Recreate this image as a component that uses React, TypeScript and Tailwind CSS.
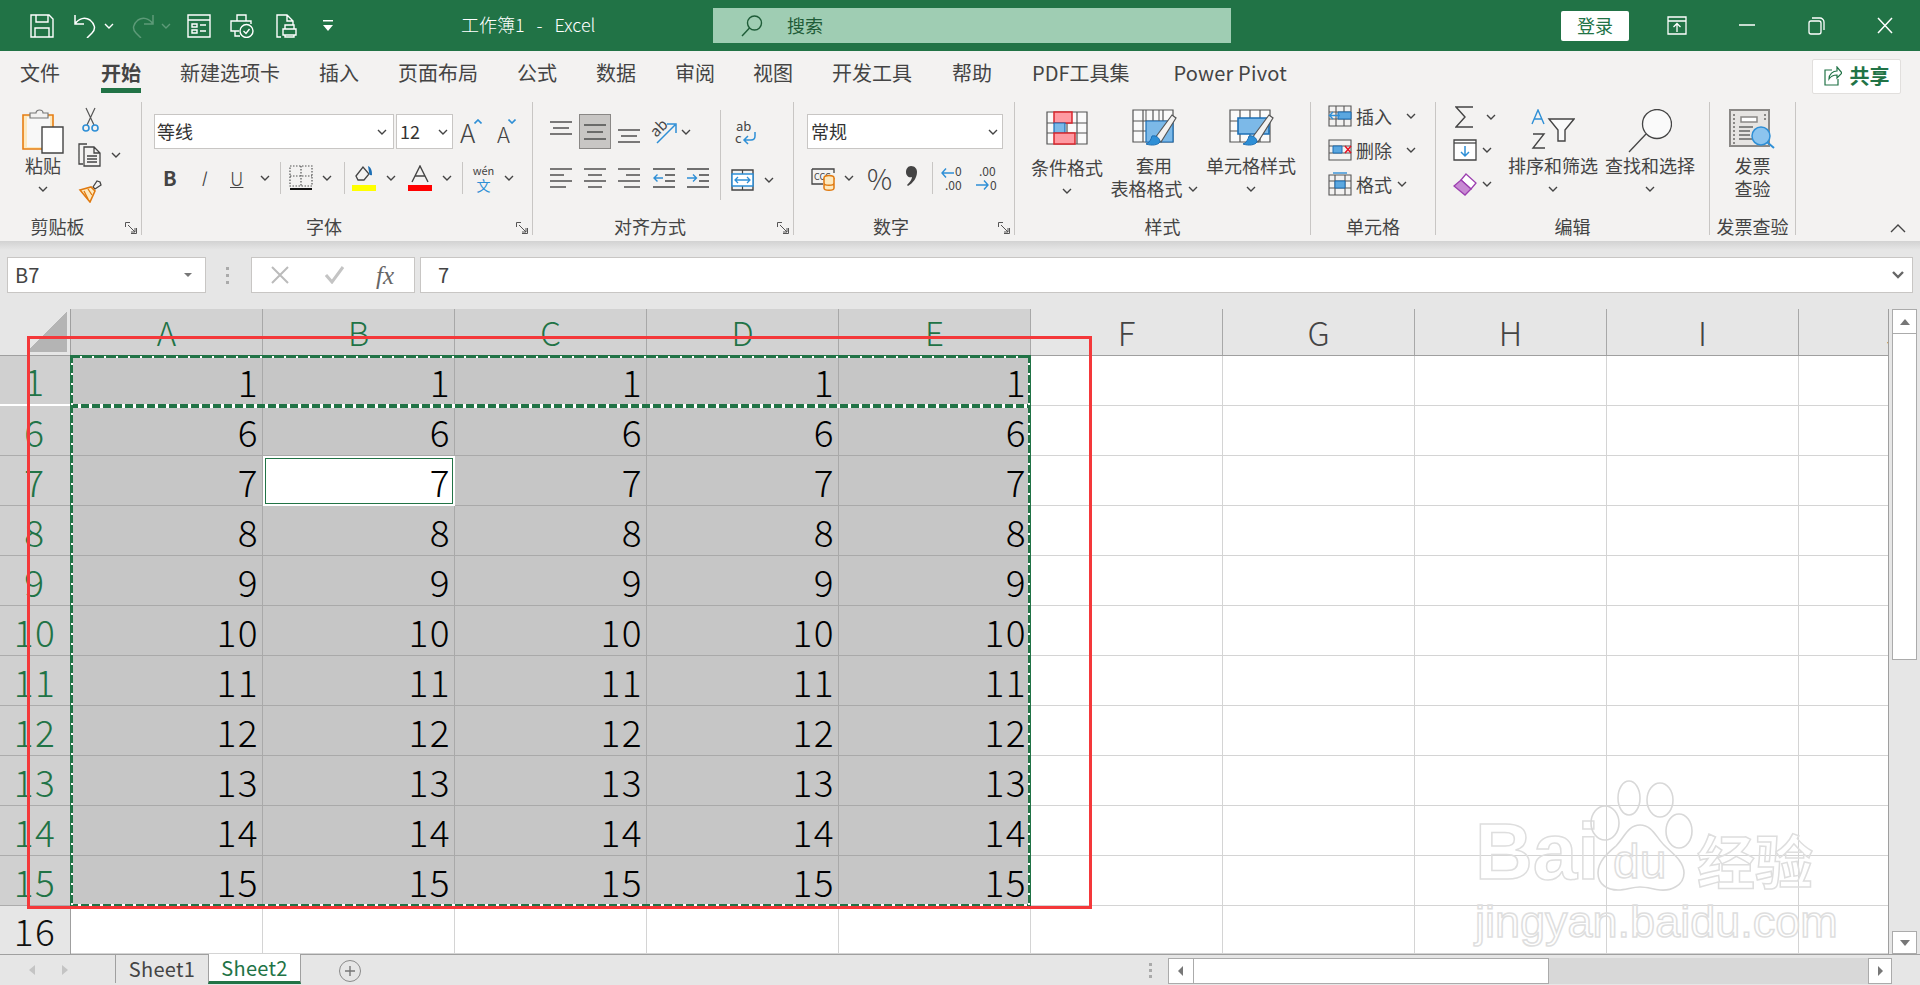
import type { ReactNode } from 'react';

const Chev = ({ className = '', color = '#444' }: { className?: string; color?: string }) => (
  <svg width="10" height="6" viewBox="0 0 10 6" className={`shrink-0 ${className}`}>
    <path d="M1 1l4 4 4-4" fill="none" stroke={color} strokeWidth="1.4" />
  </svg>
);

const Sep = ({ className = '' }: { className?: string }) => <div className={`w-px h-[32px] bg-[#c8c6c4] shrink-0 ${className}`} />;

const Launcher = () => (
  <svg width="12" height="12" viewBox="0 0 12 12" className="absolute right-[4px] bottom-[1px]">
    <path d="M.5 5V.5H5M11.5 6v5.5H6M3 3l7 7M6 10h4V6" fill="none" stroke="#555" strokeWidth="1" />
  </svg>
);

function Group({ w, label, launcher, children }: { w: string; label: string; launcher?: boolean; children: ReactNode }) {
  return (
    <div className={`relative h-[133px] flex flex-col shrink-0 border-r border-[#c8c6c4] ${w}`}>
      <div className="h-[115px] flex">{children}</div>
      <div className={`h-[18px] leading-[19px] text-[18px] text-[#444] text-center ${launcher ? 'pr-[26px]' : ''}`}>{label}</div>
      {launcher && <Launcher />}
    </div>
  );
}

function LargeButton({ icon, lines, tail, className = '' }: { icon: ReactNode; lines: string[]; tail?: boolean; className?: string }) {
  return (
    <div className={`flex flex-col items-center shrink-0 pt-[7px] text-[18px] text-[#444] ${className}`}>
      <div className="h-[45px] flex items-start justify-center">{icon}</div>
      <div className="h-[23px] leading-[23px] whitespace-nowrap">{lines[0]}</div>
      <div className="h-[23px] leading-[23px] whitespace-nowrap flex items-center gap-[5px]">
        {lines[1]}
        {(tail || !lines[1]) && <Chev />}
      </div>
    </div>
  );
}

const L = '#444';

const SaveIcon = () => (
  <svg width="24" height="24" viewBox="0 0 24 24" fill="none" stroke="#fff" strokeWidth="1.4">
    <path d="M1 1h18l4 4v18H1zM6 1v7h12V1M5 23v-9h14v9" />
  </svg>
);
const UndoIcon = ({ c = '#fff', flip = false }: { c?: string; flip?: boolean }) => (
  <svg width="24" height="24" viewBox="0 0 24 24" fill="none" stroke={c} strokeWidth="1.5" className={flip ? '-scale-x-100' : ''}>
    <path d="M2 1v9h9M2 10c4-6 10-7 15-4 5 4 6 9 2 13l-5 5" />
  </svg>
);
const FormIcon = () => (
  <svg width="24" height="24" viewBox="0 0 24 24" fill="none" stroke="#fff" strokeWidth="1.4">
    <path d="M1 1h22v22H1zM1 6h22M5 10h5v3H5zM13 11h6M5 16h5v3H5zM13 17h6" />
  </svg>
);
const PrintCheckIcon = () => (
  <svg width="24" height="24" viewBox="0 0 24 24" fill="none" stroke="#fff" strokeWidth="1.4">
    <path d="M7 7V1h9v6M9 17H1V7h20v3M5 17v5h5" />
    <circle cx="16.5" cy="17" r="6.5" />
    <path d="M13.5 17l2.5 2.5 3.5-4.5" />
  </svg>
);
const PreviewIcon = () => (
  <svg width="21" height="24" viewBox="0 0 21 24" fill="none" stroke="#fff" strokeWidth="1.4">
    <path d="M5 23H1V1h10l6 6v4M11 1v6h6M7 15h13v6H7zM9 15v-4h9v4M9 21v2h9v-2" />
  </svg>
);
const CustomizeIcon = () => (
  <svg width="10" height="12" viewBox="0 0 10 12">
    <path d="M0 0h10v1.5H0zM0 5h10l-5 6z" fill="#fff" />
  </svg>
);
const SearchGlass = ({ c = '#1f5c38', size = 22 }: { c?: string; size?: number }) => (
  <svg width={size} height={size} viewBox="0 0 22 22" fill="none" stroke={c} strokeWidth="1.4">
    <circle cx="13.5" cy="8" r="7" />
    <path d="M8.5 13L1 21" />
  </svg>
);
const Paste = () => (
  <svg width="42" height="46" viewBox="0 0 42 46" fill="none">
    <path d="M1 6h30v34H1z" fill="#fde9bf" stroke="#e67e12" strokeWidth="1.6" />
    <path d="M5 8h23v30H5z" fill="#f8f8f8" />
    <path d="M8 9V4h6c0-4 7-4 7 0h5v5z" fill="#f3f2f1" stroke="#777" strokeWidth="1.2" />
    <path d="M20 18h21v26H20z" fill="#fff" stroke="#444" strokeWidth="1.4" />
  </svg>
);
const Scissors = () => (
  <svg width="17" height="25" viewBox="0 0 17 25" fill="none" strokeWidth="1.2">
    <path d="M4 1l8 17M13 1L5 18" stroke="#555" />
    <circle cx="4" cy="21" r="3" stroke="#2e8fd6" strokeWidth="1.6" />
    <circle cx="13" cy="21" r="3" stroke="#2e8fd6" strokeWidth="1.6" />
  </svg>
);
const Copy = () => (
  <svg width="24" height="24" viewBox="0 0 24 24" fill="none" stroke={L} strokeWidth="1.3">
    <path d="M9 1H1v20h4M6 4h10l6 6v13H6zM16 4v6h6M9 13h10M9 16h10M9 19h10" />
  </svg>
);
const Painter = () => (
  <svg width="24" height="24" viewBox="0 0 24 24" fill="none">
    <path d="M15 8l4-6 3 1 1 3-6 4z" fill="#f3f2f1" stroke={L} strokeWidth="1.3" />
    <path d="M2 11l11-3 4 4-5 11z" fill="#fde9bf" stroke="#e07a10" strokeWidth="1.6" />
    <path d="M6 12l4 8M10 10l4 6" stroke="#e07a10" strokeWidth="1.3" />
  </svg>
);
const BorderIcon = () => (
  <svg width="24" height="26" viewBox="0 0 24 26" fill="none">
    <path d="M1 1h22v20H1zM12 1v20M1 11h22" stroke="#555" strokeWidth="1.2" strokeDasharray="1.5 1.5" />
    <path d="M1 24h22" stroke="#111" strokeWidth="2" />
  </svg>
);
const FillIcon = () => (
  <svg width="24" height="26" viewBox="0 0 24 26" fill="none">
    <path d="M4 11l7-9 6 7-5 6H6z" stroke={L} strokeWidth="1.3" />
    <path d="M16 1c4 2 4 6 4 9-2 1-3-1-3-3z" fill="#1c6fb5" />
    <path d="M0 20h24v6H0z" fill="#ffff00" />
  </svg>
);
const ColorA = () => (
  <svg width="24" height="26" viewBox="0 0 24 26" fill="none">
    <path d="M4 17L12 1l8 16M7 11h10" stroke={L} strokeWidth="1.4" />
    <path d="M0 20h24v6H0z" fill="#ff0000" />
  </svg>
);
const Lines = ({ ys, inset = [] as number[][] }: { ys: number[]; inset?: number[][] }) => (
  <svg width="22" height="22" viewBox="0 0 22 22" fill="none" stroke={L} strokeWidth="1.4">
    {ys.map((y, i) => {
      const [a, b] = inset[i] || [0, 22];
      return <path key={y} d={`M${a} ${y}H${b}`} />;
    })}
  </svg>
);
const Angle = () => (
  <svg width="26" height="26" viewBox="0 0 26 26" fill="none" className="overflow-visible">
    <text x="1" y="15" transform="rotate(-45 8 12)" fontSize="15" fill={L}>ab</text>
    <path d="M6 24L24 6M16 5h9v9" stroke="#2e8fd6" strokeWidth="1.5" />
  </svg>
);
const Wrap = () => (
  <svg width="22" height="24" viewBox="0 0 22 24" fill="none" className="overflow-visible">
    <text x="1" y="10" fontSize="13" fill={L}>ab</text>
    <text x="0" y="22" fontSize="13" fill={L}>c</text>
    <path d="M20 11v4c0 3-2 4-4 4H9M13 15l-4 4 4 4" stroke="#2e8fd6" strokeWidth="1.5" />
  </svg>
);
const Outdent = ({ flip = false }: { flip?: boolean }) => (
  <svg width="22" height="22" viewBox="0 0 22 22" fill="none" strokeWidth="1.4">
    <path d="M0 2h22M0 20h22M12 8h10M12 14h10" stroke={L} />
    <path d={flip ? 'M0 11h9M6 7.5l3.5 3.5L6 14.5' : 'M10 11H1M4.5 7.5L1 11l3.5 3.5'} stroke="#2e8fd6" />
  </svg>
);
const Merge = () => (
  <svg width="23" height="22" viewBox="0 0 23 22" fill="none">
    <path d="M1 1h21v20H1z" fill="#f3f2f1" stroke={L} strokeWidth="1.4" />
    <path d="M11.5 1v4M11.5 17v4" stroke={L} strokeWidth="1.2" />
    <path d="M1 5h21v12H1z" fill="#fff" stroke="#2e8fd6" strokeWidth="1.5" />
    <path d="M4 11h15M7 8l-3 3 3 3M16 8l3 3-3 3" stroke="#2e8fd6" strokeWidth="1.3" />
  </svg>
);
const Account = () => (
  <svg width="24" height="26" viewBox="0 0 24 26" fill="none" className="overflow-visible">
    <path d="M1 4h22v4M1 4v15h11" stroke={L} strokeWidth="1.3" />
    <text x="3" y="15" fontSize="9" fill={L}>CCC</text>
    <ellipse cx="18" cy="13" rx="5" ry="2.5" fill="#fde9bf" stroke="#e07a10" strokeWidth="1.5" />
    <path d="M13 13v10c0 3 10 3 10 0V13M13 18c0 3 10 3 10 0" stroke="#e07a10" strokeWidth="1.5" fill="#fde9bf" />
  </svg>
);
const CommaIcon = () => (
  <svg width="13" height="20" viewBox="0 0 13 20">
    <path d="M6 0c4 0 6 3 6 6 0 6-4 11-9 14l-1-1c3-3 5-6 5-8-3 1-6-1-6-5 0-3 2-6 5-6z" fill={L} />
  </svg>
);
const DecUp = () => (
  <svg width="23" height="26" viewBox="0 0 23 26" fill="none" className="overflow-visible">
    <text x="14" y="11" fontSize="12" fill={L}>0</text>
    <text x="4" y="25" fontSize="12" fill={L}>.00</text>
    <path d="M13 8H1M5 3.5L1 8l4 4.5" stroke="#2e8fd6" strokeWidth="1.4" />
  </svg>
);
const DecDown = () => (
  <svg width="23" height="26" viewBox="0 0 23 26" fill="none" className="overflow-visible">
    <text x="4" y="11" fontSize="12" fill={L}>.00</text>
    <text x="15" y="25" fontSize="12" fill={L}>0</text>
    <path d="M1 20h12M9 15.5l4 4.5-4 4.5" stroke="#2e8fd6" strokeWidth="1.4" />
  </svg>
);
const GridBase = () => (
  <path d="M1 1h40v32H1zM1 12h40M1 22h40M11 1v32M21 1v32M31 1v32" fill="#fafafa" stroke="#555" strokeWidth="1.2" />
);
const CondFmt = () => (
  <svg width="42" height="34" viewBox="0 0 42 34" fill="none">
    <GridBase />
    <path d="M8 1h18v11H8z" fill="#ff9aa2" stroke="#d9272e" strokeWidth="1.5" />
    <path d="M8 12h11v10H8z" fill="#7cb9e8" stroke="#1c6fb5" strokeWidth="1.2" />
    <path d="M8 22h21v11H8z" fill="#ff9aa2" stroke="#d9272e" strokeWidth="1.5" />
  </svg>
);
const Brush = () => (
  <g>
    <path d="M23 29L40 6l4 3-15 24z" fill="#f3f2f1" stroke="#555" strokeWidth="1.2" />
    <path d="M20 27c4-1 8 2 8 6-2 3-8 4-14 2 3-1 5-4 6-8z" fill="#2e8fd6" stroke="#1c6fb5" strokeWidth="1" />
  </g>
);
const TableFmt = () => (
  <svg width="45" height="38" viewBox="0 0 45 38" fill="none">
    <GridBase />
    <path d="M14 12h27v21H14z" fill="#7cb9e8" stroke="#1c6fb5" strokeWidth="1.2" />
    <path d="M14 12V1M27 12V1" stroke="#555" />
    <Brush />
  </svg>
);
const CellFmt = () => (
  <svg width="45" height="38" viewBox="0 0 45 38" fill="none">
    <GridBase />
    <path d="M9 9h31v16H9z" fill="#7cb9e8" stroke="#1c6fb5" strokeWidth="1.6" />
    <Brush />
  </svg>
);
const CellInsert = () => (
  <svg width="24" height="22" viewBox="0 0 24 22" fill="none">
    <path d="M1 1h22v20H1zM1 7h22M1 14h22M8 1v20M16 1v20" stroke="#555" strokeWidth="1.1" />
    <path d="M10 7h13v7H10z" fill="#5ba7df" stroke="#1c6fb5" />
    <path d="M12 10.5H2M5 7l-3.5 3.5L5 14" stroke="#2e8fd6" strokeWidth="1.4" />
  </svg>
);
const CellDelete = () => (
  <svg width="24" height="22" viewBox="0 0 24 22" fill="none">
    <path d="M1 1h22v20H1zM1 7h22M1 14h22" stroke="#555" strokeWidth="1.1" />
    <path d="M5 7h9v7H5z" fill="#5ba7df" stroke="#1c6fb5" />
    <path d="M17 7l6 7M23 7l-6 7" stroke="#e81123" strokeWidth="1.5" />
  </svg>
);
const CellFormat = () => (
  <svg width="24" height="24" viewBox="0 0 24 24" fill="none">
    <path d="M1 3h22v20H1zM1 9h22M1 16h22M7 3v20M17 3v20" stroke="#555" strokeWidth="1.1" />
    <path d="M7 9h10v7H7z" fill="#5ba7df" stroke="#1c6fb5" />
    <path d="M5 1h14" stroke="#2e8fd6" strokeWidth="1.4" />
  </svg>
);
const Sigma = () => (
  <svg width="19" height="22" viewBox="0 0 19 22" fill="none" stroke={L} strokeWidth="1.4">
    <path d="M18 1H1l9 10-9 10h17" />
  </svg>
);
const FillDown = () => (
  <svg width="24" height="22" viewBox="0 0 24 22" fill="none">
    <path d="M1 1h22v20H1z" fill="#fff" stroke={L} strokeWidth="1.3" />
    <path d="M1 4h22" stroke={L} strokeWidth="1.3" />
    <path d="M12 7v10M8 13l4 4 4-4" stroke="#2e8fd6" strokeWidth="1.5" />
  </svg>
);
const Eraser = () => (
  <svg width="24" height="23" viewBox="0 0 24 23" fill="none">
    <path d="M13 1l10 9-5 6-10-9z" fill="#fff" stroke="#9c3fb0" strokeWidth="1.3" />
    <path d="M8 7l10 9-6 6-11-9z" fill="#c78ad3" stroke="#9c3fb0" strokeWidth="1.3" />
  </svg>
);
const SortIcon = () => (
  <svg width="44" height="40" viewBox="0 0 44 40" fill="none">
    <path d="M1 15L7 1l6 14M3.5 10h7" stroke="#2e8fd6" strokeWidth="1.4" />
    <path d="M2 25h11L2 39h12" stroke={L} strokeWidth="1.4" />
    <path d="M18 10h25l-9 11v11h-7V21z" fill="#fafafa" stroke={L} strokeWidth="1.4" />
  </svg>
);
const FindIcon = () => (
  <svg width="44" height="44" viewBox="0 0 44 44" fill="none" stroke={L} strokeWidth="1.3">
    <ellipse cx="29" cy="15" rx="14.5" ry="14.5" fill="#fafafa" />
    <path d="M18 25L1 43" />
  </svg>
);
const InvoiceIcon = () => (
  <svg width="47" height="40" viewBox="0 0 47 40" fill="none">
    <path d="M1 1h39v36H1z" fill="#e6e4e2" stroke="#8a8886" strokeWidth="2" />
    <path d="M5 5v30M36 5v8" stroke="#8a8886" strokeWidth="2" strokeDasharray="2 2" />
    <path d="M12 8h16v5H12z" fill="#fff" stroke="#8a8886" strokeWidth="1.5" />
    <path d="M10 18h14M10 22h11M10 26h11M10 30h14" stroke="#666" strokeWidth="1.5" />
    <circle cx="32" cy="27" r="9" fill="#8cc4ee" stroke="#2e8fd6" strokeWidth="1.5" />
    <path d="M38 33l7 6" stroke="#2e8fd6" strokeWidth="2" />
  </svg>
);
const Caret = ({ down = false }: { down?: boolean }) => (
  <svg width="8" height="5" viewBox="0 0 8 5" className="absolute right-[-3px] top-[0px]">
    <path d={down ? 'M.5 .5L4 4l3.5-3.5' : 'M.5 4.5L4 1l3.5 3.5'} fill="none" stroke="#2e8fd6" strokeWidth="1.6" />
  </svg>
);

const TopTab = ({ t, active, className = '' }: { t: string; active?: boolean; className?: string }) => (
  <div className={`relative whitespace-nowrap leading-[28px] text-[20px] text-[#444] ${active ? 'font-bold' : ''} ${className}`}>
    {t}
    {active && <div className="absolute left-0 right-0 top-[29px] h-[5px] bg-[#217346]" />}
  </div>
);

const cols = ['A', 'B', 'C', 'D', 'E', 'F', 'G', 'H', 'I', 'J'];
const rows = [1, 6, 7, 8, 9, 10, 11, 12, 13, 14, 15];

function Row({ n }: { n: number }) {
  const sel = n !== 16;
  return (
    <div className={`flex ${n === 16 ? 'h-[48px]' : 'h-[50px]'}`}>
      <div
        className={`w-[71px] shrink-0 flex justify-center items-center pt-[1px] text-[37px] tracking-[1.5px] leading-none font-light border-r border-[#9f9f9f] ${
          sel ? 'bg-[#d0d0d0] text-[#217346] border-b border-b-[#acacac]' : 'bg-[#e6e6e6] text-[#111]'
        } ${n === 1 ? 'border-b-2 border-b-white' : ''}`}
      >
        {n}
      </div>
      {cols.map((c, i) => {
        const on = sel && i < 5;
        const active = n === 7 && c === 'B';
        return (
          <div
            key={c}
            className={`w-[192px] shrink-0 border-b border-r flex justify-end items-center pr-[3px] pt-[1px] text-[37px] tracking-[1.5px] leading-none font-light text-black ${
              active ? 'bg-white border-white outline outline-1 -outline-offset-3 outline-[#217346]' : on ? 'bg-[#c6c6c6] border-[#a9a9a9]' : 'bg-white border-[#d4d4d4]'
            }`}
          >
            {on ? n : ''}
          </div>
        );
      })}
    </div>
  );
}

const Arrow = ({ d, c = '#777' }: { d: string; c?: string }) => (
  <svg width="12" height="12" viewBox="0 0 12 12" className="shrink-0">
    <path d={d} fill={c} />
  </svg>
);

function Watermark() {
  const outline = 'absolute whitespace-nowrap text-transparent leading-none [-webkit-text-stroke:1.5px_#dedede]';
  return (
    <div className="absolute left-0 top-0 pointer-events-none">
      <div className={`${outline} left-[1475px] top-[812px] text-[80px] font-bold font-['Liberation_Sans',sans-serif]`}>Bai</div>
      <svg width="110" height="120" viewBox="0 0 110 120" fill="none" stroke="#d8d8d8" strokeWidth="1.6" className="absolute left-[1590px] top-[778px]">
        <ellipse cx="15" cy="45" rx="14" ry="17" />
        <ellipse cx="39" cy="20" rx="11" ry="17" />
        <ellipse cx="70" cy="22" rx="13" ry="17" />
        <ellipse cx="89" cy="53" rx="13" ry="17" />
        <path d="M50 47c12 0 16 12 24 20 8 8 20 16 20 28 0 13-14 18-24 17-8-1-13-3-20-3-8 0-14 3-22 3-10 0-20-5-20-17 0-12 10-20 18-27 8-8 12-21 24-21z" />
      </svg>
      <div className={`${outline} left-[1613px] top-[838px] text-[48px] font-['Liberation_Sans',sans-serif]`}>du</div>
      <div className={`${outline} left-[1697px] top-[830px] text-[58px] font-bold`}>经验</div>
      <div className={`${outline} left-[1475px] top-[899px] text-[45px] font-['Liberation_Sans',sans-serif]`}>jingyan.baidu.com</div>
    </div>
  );
}

export default function App() {
  return (
    <div className="relative w-[1920px] h-[985px] overflow-hidden bg-[#e6e6e6] font-['Noto_Sans_CJK_SC',sans-serif]">
      {/* title bar */}
      <div className="h-[51px] bg-[#217346] flex items-center text-white">
        <div className="ml-[30px] w-[24px]"><SaveIcon /></div>
        <div className="ml-[19px] w-[24px]"><UndoIcon /></div>
        <Chev className="ml-[7px]" color="#fff" />
        <div className="ml-[17px] w-[24px]"><UndoIcon c="#5d9a78" flip /></div>
        <Chev className="ml-[6px]" color="#5d9a78" />
        <div className="ml-[16px] w-[24px]"><FormIcon /></div>
        <div className="ml-[19px] w-[24px]"><PrintCheckIcon /></div>
        <div className="ml-[22px] w-[21px]"><PreviewIcon /></div>
        <div className="ml-[26px] w-[10px]"><CustomizeIcon /></div>
        <div className="ml-[128px] w-[137px] text-[18px] whitespace-pre font-light -mt-[3px]">工作簿1   -   Excel</div>
        <div className="ml-[115px] w-[518px] h-[35px] bg-[#9fcdb3] flex items-center pl-[28px] text-[18px] text-[#1f5c38]">
          <SearchGlass />
          <span className="ml-[24px]">搜索</span>
        </div>
        <div className="ml-[330px] w-[68px] h-[30px] rounded-[2px] bg-white text-[#217346] text-[18px] flex items-center justify-center">登录</div>
        <svg width="20" height="20" viewBox="0 0 20 20" fill="none" stroke="#fff" strokeWidth="1.3" className="ml-[38px]">
          <path d="M1 1h18v17H1zM1 5h18M10 16V8M6.5 11L10 7.5l3.5 3.5" />
        </svg>
        <svg width="20" height="20" viewBox="0 0 20 20" className="ml-[50px]"><path d="M2 9h16" stroke="#fff" strokeWidth="1.5" /></svg>
        <svg width="20" height="20" viewBox="0 0 20 20" fill="none" stroke="#fff" strokeWidth="1.3" className="ml-[49px]">
          <rect x="3" y="5" width="12" height="13" rx="2" />
          <path d="M6 2h8c2 0 4 2 4 4v8" />
        </svg>
        <svg width="20" height="20" viewBox="0 0 20 20" className="ml-[49px]"><path d="M3 2l14 15M17 2L3 17" stroke="#fff" strokeWidth="1.5" /></svg>
      </div>

      {/* tabs + ribbon */}
      <div className="h-[190px] bg-[#f3f2f1]">
        <div className="h-[51px] pb-[8px] pl-[20px] flex items-center relative">
          <TopTab t="文件" />
          <TopTab t="开始" active className="ml-[41px]" />
          <TopTab t="新建选项卡" className="ml-[39px]" />
          <TopTab t="插入" className="ml-[39px]" />
          <TopTab t="页面布局" className="ml-[39px]" />
          <TopTab t="公式" className="ml-[39px]" />
          <TopTab t="数据" className="ml-[39px]" />
          <TopTab t="审阅" className="ml-[39px]" />
          <TopTab t="视图" className="ml-[38px]" />
          <TopTab t="开发工具" className="ml-[39px]" />
          <TopTab t="帮助" className="ml-[40px]" />
          <TopTab t="PDF工具集" className="ml-[40px]" />
          <TopTab t="Power Pivot" className="ml-[44px] tracking-[.2px]" />
          <div className="ml-auto mr-[19px] mt-[7px] w-[89px] h-[35px] bg-white border border-[#e1dfdd] rounded-[2px] flex items-center justify-center gap-[8px] text-[20px] font-bold text-[#217346]">
            <svg width="18" height="20" viewBox="0 0 18 20" fill="none" stroke="#217346" strokeWidth="1.2">
              <path d="M8 4H1v15h13v-6M5 13c0-5 4-8 8-8V1l5 6-5 5V9c-4 0-6 1-8 4z" />
            </svg>
            共享
          </div>
        </div>

        <div className="flex h-[133px]">
          <Group w="w-[142px]" label="剪贴板" launcher>
            <LargeButton icon={<Paste />} lines={['粘贴', '']} className="ml-[7px] w-[72px] pt-[5px]" />
            <div className="flex flex-col pt-[5px] ml-[-1px]">
              <div className="ml-[4px] h-[25px]"><Scissors /></div>
              <div className="mt-[11px] flex items-center"><Copy /><Chev className="ml-[9px]" /></div>
              <div className="mt-[12px]"><Painter /></div>
            </div>
          </Group>

          <Group w="w-[391px]" label="字体" launcher>
            <div className="flex flex-col">
              <div className="flex items-center mt-[12px] ml-[12px] h-[35px]">
                <div className="w-[240px] h-full bg-white border border-[#c8c6c4] flex items-center pl-[2px] pr-[6px] justify-between text-[18px] text-[#333]">等线<Chev /></div>
                <div className="ml-[2px] w-[57px] h-full bg-white border border-[#c8c6c4] flex items-center pl-[3px] pr-[4px] justify-between text-[18px] text-[#333]">12<Chev /></div>
                <div className="ml-[7px] w-[19px] h-[26px] relative text-[26px] leading-[26px] text-[#444] font-light">A<Caret /></div>
                <div className="ml-[18px] w-[16px] h-[26px] relative text-[22px] leading-[28px] text-[#444] font-light">A<Caret down /></div>
              </div>
              <div className="flex items-center h-[32px] mt-[13px]">
                <div className="ml-[21px] w-[14px] text-[20px] font-bold text-[#444]">B</div>
                <div className="ml-[19px] w-[14px] text-[20px] italic font-light text-[#444] text-center">I</div>
                <div className="ml-[20px] w-[15px] text-[19px] font-light underline text-[#444]">U</div>
                <Chev className="ml-[15px]" />
                <Sep className="ml-[10px]" />
                <div className="ml-[8px] w-[23px]"><BorderIcon /></div>
                <Chev className="ml-[10px]" />
                <Sep className="ml-[12px]" />
                <div className="ml-[7px] w-[24px]"><FillIcon /></div>
                <Chev className="ml-[10px]" />
                <div className="ml-[12px] w-[24px]"><ColorA /></div>
                <Chev className="ml-[10px]" />
                <Sep className="ml-[10px]" />
                <div className="ml-[10px] w-[21px] flex flex-col items-center gap-[2px]">
                  <span className="text-[11px] leading-[12px] text-[#444]">wén</span>
                  <span className="text-[14px] leading-[14px] text-[#2e8fd6]">文</span>
                </div>
                <Chev className="ml-[10px]" />
              </div>
            </div>
          </Group>

          <Group w="w-[261px]" label="对齐方式" launcher>
            <div className="flex flex-col w-[187px]">
              <div className="flex items-center mt-[12px] h-[35px]">
                <div className="ml-[17px] w-[22px]"><Lines ys={[1, 7, 13]} inset={[[0, 22], [3, 19], [0, 22]]} /></div>
                <div className="ml-[7px] w-[32px] h-[35px] bg-[#c8c6c4] border border-[#8a8886] flex items-center justify-center"><Lines ys={[4, 11, 18]} inset={[[0, 22], [3, 19], [0, 22]]} /></div>
                <div className="ml-[7px] w-[22px]"><Lines ys={[9, 15, 21]} inset={[[0, 22], [3, 19], [0, 22]]} /></div>
                <div className="ml-[11px] w-[26px]"><Angle /></div>
                <Chev className="ml-[4px]" />
              </div>
              <div className="flex items-center h-[32px] mt-[13px]">
                <div className="ml-[17px] w-[22px]"><Lines ys={[2, 8, 14, 20]} inset={[[0, 22], [0, 14], [0, 22], [0, 16]]} /></div>
                <div className="ml-[12px] w-[22px]"><Lines ys={[2, 8, 14, 20]} inset={[[0, 22], [4, 18], [0, 22], [4, 18]]} /></div>
                <div className="ml-[12px] w-[22px]"><Lines ys={[2, 8, 14, 20]} inset={[[0, 22], [8, 22], [0, 22], [6, 22]]} /></div>
                <div className="ml-[13px] w-[22px]"><Outdent /></div>
                <div className="ml-[12px] w-[22px]"><Outdent flip /></div>
              </div>
            </div>
            <div className="w-px h-[90px] mt-[8px] bg-[#c8c6c4]" />
            <div className="flex flex-col">
              <div className="ml-[14px] mt-[19px] h-[24px]"><Wrap /></div>
              <div className="flex items-center ml-[10px] mt-[19px] h-[32px]"><Merge /><Chev className="ml-[10px]" /></div>
            </div>
          </Group>

          <Group w="w-[221px]" label="数字" launcher>
            <div className="flex flex-col">
              <div className="ml-[13px] mt-[12px] w-[196px] h-[35px] bg-white border border-[#c8c6c4] flex items-center pl-[3px] pr-[4px] justify-between text-[18px] text-[#333]">常规<Chev /></div>
              <div className="flex items-center h-[32px] mt-[13px]">
                <div className="ml-[17px] w-[24px]"><Account /></div>
                <Chev className="ml-[9px]" />
                <div className="ml-[13px] w-[22px] text-[28px] font-light text-[#444] leading-none">%</div>
                <div className="ml-[16px] w-[13px] -mt-[4px]"><CommaIcon /></div>
                <Sep className="ml-[14px]" />
                <div className="ml-[8px] w-[23px]"><DecUp /></div>
                <div className="ml-[11px] w-[23px]"><DecDown /></div>
              </div>
            </div>
          </Group>

          <Group w="w-[296px]" label="样式">
            <LargeButton icon={<CondFmt />} lines={['条件格式', '']} className="ml-[16px] w-[72px] pt-[9px]" />
            <LargeButton icon={<TableFmt />} lines={['套用', '表格格式']} tail className="ml-[7px] w-[88px]" />
            <LargeButton icon={<CellFmt />} lines={['单元格样式', '']} className="ml-[8px] w-[90px]" />
          </Group>

          <Group w="w-[125px]" label="单元格">
            <div className="flex flex-col text-[18px] text-[#444] -mt-[1px]">
              <div className="flex items-center h-[30px]">
                <div className="ml-[17px] w-[24px]"><CellInsert /></div>
                <span className="ml-[4px] w-[36px]">插入</span>
                <Chev className="ml-[14px]" />
              </div>
              <div className="flex items-center h-[30px] mt-[4px]">
                <div className="ml-[17px] w-[24px]"><CellDelete /></div>
                <span className="ml-[4px] w-[36px]">删除</span>
                <Chev className="ml-[14px]" />
              </div>
              <div className="flex items-center h-[30px] mt-[4px]">
                <div className="ml-[17px] w-[24px]"><CellFormat /></div>
                <span className="ml-[4px] w-[36px]">格式</span>
                <Chev className="ml-[5px]" />
              </div>
            </div>
          </Group>

          <Group w="w-[274px]" label="编辑">
            <div className="flex flex-col w-[72px]">
              <div className="flex items-center h-[30px]">
                <div className="ml-[19px] w-[19px]"><Sigma /></div>
                <Chev className="ml-[12px]" />
              </div>
              <div className="flex items-center h-[30px] mt-[3px]">
                <div className="ml-[17px] w-[24px]"><FillDown /></div>
                <Chev className="ml-[5px]" />
              </div>
              <div className="flex items-center h-[30px] mt-[4px]">
                <div className="ml-[17px] w-[24px]"><Eraser /></div>
                <Chev className="ml-[5px]" />
              </div>
            </div>
            <LargeButton icon={<SortIcon />} lines={['排序和筛选', '']} className="w-[90px]" />
            <LargeButton icon={<FindIcon />} lines={['查找和选择', '']} className="ml-[7px] w-[90px] pt-[5px]" />
          </Group>

          <Group w="w-[86px]" label="发票查验">
            <div className="flex flex-col items-center w-full pt-[7px] text-[18px] text-[#444]">
              <div className="h-[45px]"><InvoiceIcon /></div>
              <div className="h-[23px] leading-[23px]">发票</div>
              <div className="h-[23px] leading-[23px]">查验</div>
            </div>
          </Group>

          <div className="flex-1 flex justify-end items-end pr-[14px] pb-[2px]">
            <svg width="16" height="9" viewBox="0 0 16 9"><path d="M1 8l7-7 7 7" fill="none" stroke="#444" strokeWidth="1.4" /></svg>
          </div>
        </div>
      </div>

      {/* formula bar */}
      <div className="h-[68px] pt-[16px] bg-[linear-gradient(#d2d2d2,#e6e6e6_9px)] flex text-[#444]">
        <div className="ml-[7px] w-[199px] h-[36px] bg-white border border-[#c8c6c4] flex items-center justify-between pl-[7px] pr-[11px] text-[20px]">
          B7
          <Arrow d="M2 4h8L6 8z" />
        </div>
        <div className="ml-[20px] w-[3px] h-[36px] flex flex-col justify-center gap-[4px]">
          <div className="h-[3px] bg-[#aaa]" />
          <div className="h-[3px] bg-[#aaa]" />
          <div className="h-[3px] bg-[#aaa]" />
        </div>
        <div className="ml-[22px] w-[164px] h-[36px] bg-white border border-[#c8c6c4] flex items-center">
          <svg width="18" height="18" viewBox="0 0 18 18" className="ml-[19px]"><path d="M1 1l16 16M17 1L1 17" stroke="#bbb" strokeWidth="2" /></svg>
          <svg width="20" height="18" viewBox="0 0 20 18" className="ml-[36px]"><path d="M1 9l6 7L18 1" fill="none" stroke="#c4c4c4" strokeWidth="3" /></svg>
          <span className="ml-[31px] text-[25px] leading-none italic font-['Liberation_Serif',serif] text-[#666]">fx</span>
        </div>
        <div className="ml-[5px] w-[1493px] h-[36px] bg-white border border-[#c8c6c4] flex items-center justify-between pl-[17px] pr-[8px] text-[20px]">
          7
          <svg width="12" height="8" viewBox="0 0 12 8"><path d="M1 1l5 5 5-5" fill="none" stroke="#666" strokeWidth="2.4" /></svg>
        </div>
      </div>

      {/* sheet */}
      <div className="flex h-[645px]">
        <div className="w-[1889px] overflow-hidden border-r border-[#9f9f9f] shrink-0">
          <div className="w-[1991px]">
            <div className="flex h-[47px] border-b border-[#9f9f9f]">
              <div className="w-[71px] shrink-0 bg-[#e6e6e6] border-r border-[#9f9f9f] flex items-end justify-end pr-[3px] pb-[3px]">
                <div className="w-[40px] h-[40px] bg-[linear-gradient(135deg,transparent_50%,#b4b4b4_50%)]" />
              </div>
              {cols.map((c, i) => (
                <div
                  key={c}
                  className={`w-[192px] shrink-0 border-r border-[#a8a8a8] flex items-center justify-center pt-[1px] text-[33px] leading-none font-light ${
                    i < 5 ? 'bg-[#d2d2d2] text-[#217346]' : 'bg-[#e6e6e6] text-[#444]'
                  }`}
                >
                  {c}
                </div>
              ))}
            </div>
            {rows.map((n) => <Row key={n} n={n} />)}
            <Row n={16} />
          </div>
        </div>
        <div className="ml-[3px] w-[25px] flex flex-col">
          <div className="h-[25px] bg-white border border-[#ababab] flex items-center justify-center"><Arrow d="M1 9h10L6 3z" /></div>
          <div className="h-[326px] bg-white border-x border-b border-[#ababab]" />
          <div className="mt-auto h-[23px] bg-white border border-[#ababab] flex items-center justify-center"><Arrow d="M1 3h10L6 9z" /></div>
        </div>
      </div>

      {/* sheet tabs */}
      <div className="h-[31px] flex border-t border-[#a0a0a0]">
        <div className="ml-[26px] flex items-center"><Arrow d="M9 1v10L3 6z" c="#c4c4c4" /></div>
        <div className="ml-[21px] flex items-center"><Arrow d="M3 1v10l6-5z" c="#c4c4c4" /></div>
        <div className="ml-[44px] w-px h-[28px] bg-[#a0a0a0]" />
        <div className="w-[92px] h-[28px] flex items-center justify-center text-[20px] tracking-[.3px] text-[#444]">Sheet1</div>
        <div className="-mt-px w-[93px] h-[30px] bg-white border-x border-[#a0a0a0] border-b-[3px] border-b-[#217346] flex items-center justify-center text-[20px] tracking-[.3px] text-[#217346]">Sheet2</div>
        <div className="ml-[38px] mt-[5px] w-[22px] h-[22px] rounded-full border border-[#8a8a8a] flex items-center justify-center">
          <svg width="12" height="12" viewBox="0 0 12 12"><path d="M6 1v10M1 6h10" stroke="#777" strokeWidth="1.4" /></svg>
        </div>
        <div className="ml-[788px] flex flex-col justify-center gap-[3px] w-[3px]">
          <div className="h-[3px] bg-[#aaa]" />
          <div className="h-[3px] bg-[#aaa]" />
          <div className="h-[3px] bg-[#aaa]" />
        </div>
        <div className="ml-[16px] mt-[3px] w-[724px] h-[26px] bg-[#d8d8d8] flex">
          <div className="w-[26px] bg-white border border-[#ababab] flex items-center justify-center"><Arrow d="M8 1v10L3 6z" /></div>
          <div className="w-[355px] bg-white border-y border-r border-[#ababab]" />
          <div className="ml-auto w-[24px] bg-white border border-[#ababab] flex items-center justify-center"><Arrow d="M4 1v10l5-5z" /></div>
        </div>
      </div>

      {/* copy marquee */}
      <div className="absolute left-[70px] top-[355px] w-[961px] h-[3px] border-t border-[#217346] bg-[repeating-linear-gradient(90deg,#217346_0_10px,#fff_10px_12px)]" />
      <div className="absolute left-[70px] top-[404px] w-[961px] h-[4px] bg-[repeating-linear-gradient(90deg,#217346_0_8px,#fff_8px_11px)]" />
      <div className="absolute left-[70px] top-[904px] w-[961px] h-[3px] border-b border-[#217346] bg-[repeating-linear-gradient(90deg,#217346_0_8px,#fff_8px_11px)]" />
      <div className="absolute left-[70px] top-[355px] h-[552px] w-[3px] border-l border-[#217346] bg-[repeating-linear-gradient(180deg,#217346_0_8px,#fff_8px_10px)]" />
      <div className="absolute left-[1028px] top-[355px] h-[552px] w-[3px] border-r border-[#217346] bg-[repeating-linear-gradient(180deg,#217346_0_8px,#fff_8px_10px)]" />

      {/* red annotation */}
      <div className="absolute left-[27px] top-[336px] w-[1065px] h-[573px] border-[3px] border-[#f4383a] pointer-events-none" />

      <Watermark />
    </div>
  );
}
